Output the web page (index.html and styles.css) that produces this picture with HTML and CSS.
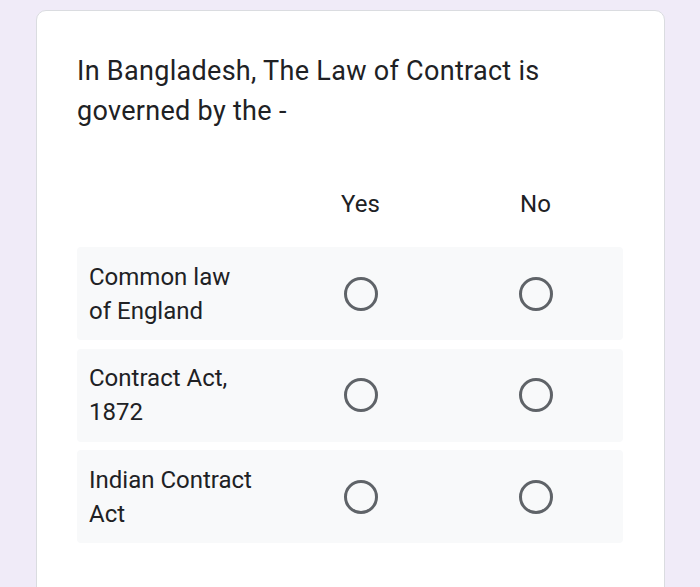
FILE: index.html
```html
<!DOCTYPE html>
<html lang="en">
<head>
<meta charset="utf-8">
<title>Grid question</title>
<link rel="stylesheet" href="styles.css">
</head>
<body>
<div class="card">
  <div class="title">In Bangladesh, The Law of Contract is<br>governed by the -</div>
  <div class="grid">
    <div class="head">
      <div class="label"></div>
      <div class="col">Yes</div>
      <div class="col">No</div>
    </div>
    <div class="row">
      <div class="label">Common law<br>of England</div>
      <div class="col"><span class="radio"></span></div>
      <div class="col"><span class="radio"></span></div>
    </div>
    <div class="row">
      <div class="label">Contract Act,<br>1872</div>
      <div class="col"><span class="radio"></span></div>
      <div class="col"><span class="radio"></span></div>
    </div>
    <div class="row">
      <div class="label">Indian Contract<br>Act</div>
      <div class="col"><span class="radio"></span></div>
      <div class="col"><span class="radio"></span></div>
    </div>
  </div>
</div>
</body>
</html>
```

FILE: styles.css
```css
html, body {
  margin: 0;
  padding: 0;
  background: #f0ebf8;
  height: 100%;
  overflow: hidden;
}
body {
  font-family: Roboto, "Liberation Sans", sans-serif;
  color: #202124;
}
.card {
  margin: 10px 0 0 36px;
  width: 629px;
  min-height: 600px;
  background: #fff;
  border: 1px solid #dadce0;
  border-radius: 10px;
  padding: 40px 44px 0 40px;
  box-sizing: border-box;
}
.title {
  font-size: 27px;
  line-height: 40px;
  letter-spacing: 0.3px;
}
.grid {
  margin-top: 56px;
  width: 546px;
  display: flex;
  flex-direction: column;
  gap: 8.5px;
}
.head, .row {
  display: grid;
  grid-template-columns: 1fr 175px 175px;
  align-items: center;
  font-size: 24px;
  line-height: 34px;
}
.head {
  margin-bottom: 17.5px;
}
.row {
  height: 93px;
  background: #f8f9fa;
  border-radius: 4px;
}
.row .label {
  padding-left: 12px;
}
.col {
  display: flex;
  justify-content: center;
  align-items: center;
}
.radio {
  width: 28px;
  height: 28px;
  border: 3px solid #5f6368;
  border-radius: 50%;
}
```
